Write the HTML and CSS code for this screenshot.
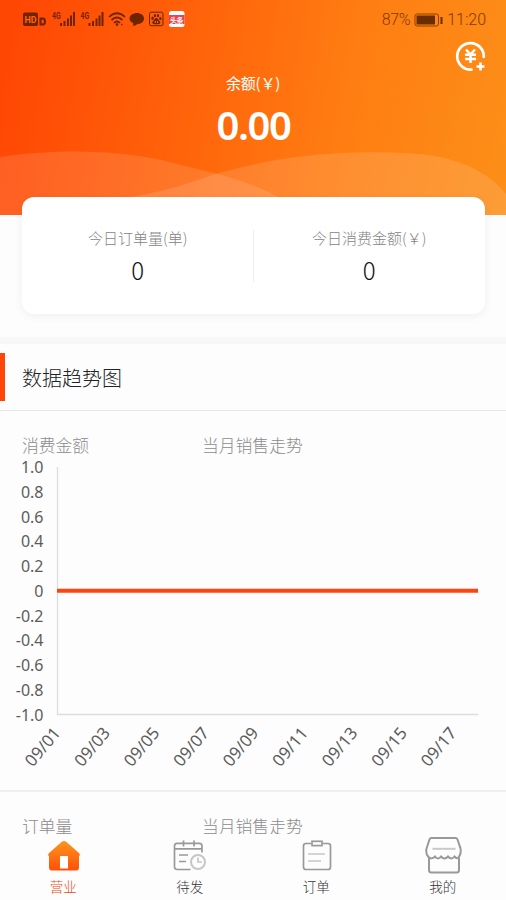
FILE: index.html
```html
<!DOCTYPE html>
<html lang="zh-CN">
<head>
<meta charset="utf-8">
<title>营业</title>
<link rel="stylesheet" href="styles.css">
</head>
<body>
<div class="app">
  <header class="hero">
    <svg class="waves" viewBox="0 0 506 215">
      <path d="M0 157C70 147 130 152 170 162C200 170 212 172 225 176C245 182 262 188 278 197L290 215H0Z" fill="#fff" fill-opacity=".12"/>
      <path d="M130 197C175 190 195 180 217 173.500C250 165 275 159 305 156C350 151 410 151 440 157C475 165 494 179 506 194V215H130Z" fill="#fff" fill-opacity=".13"/>
    </svg>
    <div class="status">
      <svg class="status-icons" width="166" height="20" viewBox="0 0 166 20" fill="#702300">
        <rect x="0" y="2.500" width="15" height="13.500" rx="2"/>
        <text class="hd" x="1.500" y="13" textLength="12">HD</text>
        <path fill-rule="evenodd" d="M16.500 7.500H20Q23 7.500 23 11.500T20 15.500H16.500ZM18.600 9.500V13.500H19.500Q21 13.500 21 11.500T19.500 9.500Z"/>
        <text class="net" x="29" y="8.500" textLength="8.500" lengthAdjust="spacingAndGlyphs">4G</text>
        <path d="M37 13h2v3h-2zM40.500 11h2v5h-2zM44 8.500h2V16h-2zM47 5.500h2V16h-2zM50 2h2v14h-2z"/>
        <text class="net" x="57.500" y="8.500" textLength="8.500" lengthAdjust="spacingAndGlyphs">4G</text>
        <path d="M65.500 13h2v3h-2zM69 11h2v5h-2zM72.500 8.500h2V16h-2zM75.500 5.500h2V16h-2zM78.500 2h2v14h-2z"/>
        <g fill="none" stroke="#702300" stroke-width="1.700">
          <path d="M86 7Q94 -0.500 102 7M88.500 10Q94 5 99.500 10M91 12.800Q94 10.200 97 12.800"/>
          <rect x="126.500" y="2.200" width="13.500" height="13.500" rx="1.500" stroke-width="1"/>
        </g>
        <circle cx="94" cy="14.600" r="1.300"/>
        <circle cx="98.800" cy="14.600" r=".8"/>
        <path d="M114 3C118 3 121 5.200 121 8.600S118 14.200 114 14.200Q112.500 16 109.500 15.800Q110.500 15 110.300 13.300Q106.500 11.500 106.500 8.600C106.500 5.200 110 3 114 3Z"/>
        <ellipse cx="129.600" cy="8.300" rx="1.200" ry="1.700"/>
        <ellipse cx="132" cy="5.700" rx="1.100" ry="1.600"/>
        <ellipse cx="135" cy="5.700" rx="1.100" ry="1.600"/>
        <ellipse cx="137.300" cy="8.500" rx="1.200" ry="1.600"/>
        <path d="M133.300 7.900C135 7.900 135.200 10 136.700 11C138 12.200 137.200 14.300 135.500 14.200H131.300C129.300 14.300 128.700 12.200 130 11C131.500 10 131.700 7.900 133.300 7.900Z"/>
        <rect x="131.700" y="11" width="1.200" height="2" fill="#fe6509"/><rect x="134" y="11" width="1.200" height="2" fill="#fe6509"/>
        <rect x="146" y="1" width="15.500" height="16" rx="2.500" fill="#fff"/>
        <rect x="146" y="5" width="15.500" height="9" fill="#f0414e"/>
        <text class="news" x="147" y="12.500" textLength="13.500">头条</text>
      </svg>
      <div class="status-right">
        <span class="percent">87%</span>
        <svg width="29" height="14" viewBox="0 0 29 14" fill="#6a2d00"><rect x="1" y="1" width="23.500" height="12" rx="2" fill="none" stroke="#8c3e05"/><rect x="2.500" y="2.500" width="18.500" height="9"/><rect x="26.500" y="4" width="2" height="7"/></svg>
        <span class="clock">11:20</span>
      </div>
    </div>
    <svg class="recharge" viewBox="0 0 32 32" fill="none" stroke="#fff">
      <path d="M16.500 28.600A13.300 13.300 0 1 1 28.800 16" stroke-width="2.700" stroke-linecap="round"/>
      <path d="M11 8.500L15.500 13.500L20 8.500M10 13.700H21M10 18H21M15.500 13.500V22" stroke-width="2.500"/>
      <path d="M25.500 21.500V29.500M21.500 25.500H29.500" stroke-width="2.600"/>
    </svg>
    <div class="balance-label">余额(￥)</div>
    <div class="balance">0.00</div>
  </header>
  <section class="card">
    <div class="stat"><span class="stat-label">今日订单量(单)</span><span class="stat-value">0</span></div>
    <div class="divider"></div>
    <div class="stat"><span class="stat-label">今日消费金额(￥)</span><span class="stat-value">0</span></div>
  </section>
  <div class="band"></div>
  <h2 class="title">数据趋势图</h2>
  <section class="panel">
    <div class="panel-head"><span>消费金额</span><span>当月销售走势</span></div>
    <svg class="chart" width="506" height="334" viewBox="0 457 506 334">
      <path d="M57.500 467V714.500H478" fill="none" stroke="#dcdde0" stroke-width="1.300"/>
      <path d="M57 590.800H478" stroke="#ff440f" stroke-width="4"/>
      <g class="y-axis">
        <text x="43.500" y="473">1.0</text><text x="43.500" y="497.800">0.8</text><text x="43.500" y="522.500">0.6</text>
        <text x="43.500" y="547.300">0.4</text><text x="43.500" y="572">0.2</text><text x="43.500" y="596.500">0</text>
        <text x="43.500" y="621.500">-0.2</text><text x="43.500" y="646.200">-0.4</text><text x="43.500" y="671">-0.6</text>
        <text x="43.500" y="695.800">-0.8</text><text x="43.500" y="720.500">-1.0</text>
      </g>
      <g class="x-axis">
        <text transform="translate(61.500 733.500) rotate(-50)">09/01</text>
        <text transform="translate(111 733.500) rotate(-50)">09/03</text>
        <text transform="translate(160.500 733.500) rotate(-50)">09/05</text>
        <text transform="translate(210 733.500) rotate(-50)">09/07</text>
        <text transform="translate(259.500 733.500) rotate(-50)">09/09</text>
        <text transform="translate(309 733.500) rotate(-50)">09/11</text>
        <text transform="translate(358.500 733.500) rotate(-50)">09/13</text>
        <text transform="translate(408 733.500) rotate(-50)">09/15</text>
        <text transform="translate(457.500 733.500) rotate(-50)">09/17</text>
      </g>
    </svg>
  </section>
  <section class="panel next">
    <div class="panel-head"><span>订单量</span><span>当月销售走势</span></div>
  </section>
  <nav class="tabs">
    <a class="tab active">
      <svg viewBox="0 0 40 40"><defs><linearGradient id="home" x2="0" y2="1"><stop offset="0" stop-color="#ff951e"/><stop offset="1" stop-color="#ff5008"/></linearGradient></defs><path d="M18.500 6Q21 4.200 23.500 6L36.500 17.500Q37.500 19 36 20.500V31.500Q36 34.500 33 34.500H9Q6 34.500 6 31.500V20.500Q4.500 19 5.500 17.500Z" fill="url(#home)"/><rect x="17" y="20" width="8" height="12.500" fill="#fff"/></svg>
      <span>营业</span>
    </a>
    <a class="tab">
      <svg viewBox="0 0 40 40" fill="none" stroke="#999" stroke-width="1.700"><path d="M20.500 33.500H7.500Q4.500 33.500 4.500 31V10Q4.500 7.300 7 7.300H29.500Q32 7.300 32 10V16.500M4.500 12.800H32M13.500 4.500V10.500M24 4.500V10.500M9 19H18M9 25.500H16"/><circle cx="28" cy="26" r="7" stroke="#c6c6c6" stroke-width="2"/><path d="M28 21.500V26H32" stroke="#c6c6c6"/></svg>
      <span>待发</span>
    </a>
    <a class="tab">
      <svg viewBox="0 0 40 40" fill="none" stroke="#999" stroke-width="1.700"><path d="M15 7.500H10Q7.500 7.500 7.500 10V31Q7.500 33.500 10 33.500H32Q34.500 33.500 34.500 31V10Q34.500 7.500 32 7.500H27"/><rect x="16" y="5.300" width="10" height="4.300"/><path d="M12 18H29M12 25H25" stroke="#c6c6c6" stroke-width="1.500"/></svg>
      <span>订单</span>
    </a>
    <a class="tab">
      <svg viewBox="0 0 40 40" fill="none" stroke="#999" stroke-width="2"><path d="M8.500 2Q7 2 6.500 3.500L4.500 9.500Q1.500 17 5.500 21Q8.500 24 12 20.500Q15 24.500 18 20.500Q21.500 24.500 25 20.500Q28.500 24.500 31.500 20.500Q34.500 24 36.500 20Q39 15 36.500 9.500L34.500 3.500Q34 2 32.500 2ZM6 22V34Q6 36.500 8.500 36.500H33.500Q36 36.500 36 34V22"/><path d="M9.500 12.800H32.500" stroke="#c9c9c9"/></svg>
      <span>我的</span>
    </a>
  </nav>
</div>
</body>
</html>
```
FILE: styles.css
```css
* { box-sizing: border-box; }
body {
  margin: 0;
  background: #fdfdfd;
  font-family: "Noto Sans CJK SC", sans-serif;
  font-weight: 300;
}
.app {
  width: 506px;
  height: 900px;
  overflow: hidden;
  display: flex;
  flex-direction: column;
}
.app > * { flex-shrink: 0; }
.hero {
  position: relative;
  height: 215px;
  background: linear-gradient(100deg, #ff4704 3%, #ff650b 40%, #ff7d12 67%, #fc8f18 100%);
  color: #fff;
  text-align: center;
}
.waves { position: absolute; left: 0; top: 0; width: 506px; height: 215px; }
.status {
  position: relative;
  display: flex;
  justify-content: space-between;
  align-items: center;
  height: 39px;
  padding: 0 20px 0 23px;
  color: #813806;
}
.hd { font: 700 9px Roboto, sans-serif; fill: #ff6510; }
.net { font: 700 9px Roboto, sans-serif; }
.news { font: 700 7px "Noto Sans CJK SC", sans-serif; fill: #fff; }
.status-right {
  display: flex;
  align-items: center;
  gap: 4px;
  font: 300 16px/20px Roboto, sans-serif;
}
.percent { letter-spacing: -0.4px; }
.recharge { position: absolute; left: 455px; top: 41px; width: 32px; height: 32px; }
.balance-label {
  position: relative;
  margin-top: 33px;
  line-height: 22px;
  font-size: 15px;
  font-weight: 400;
  letter-spacing: -0.2px;
}
.balance {
  position: relative;
  margin-top: 6px;
  padding-left: 1px;
  font: 600 40px/50px "Noto Sans", sans-serif;
  letter-spacing: -1.4px;
}
.card {
  position: relative;
  width: 463px;
  height: 117px;
  margin: -18px 0 23px 22px;
  border-radius: 12px;
  background: #fff;
  box-shadow: 0 2px 8px rgba(30, 30, 50, .06);
  display: flex;
  align-items: center;
}
.stat {
  flex: 1;
  display: flex;
  flex-direction: column;
  align-items: center;
  gap: 6px;
  padding-top: 1px;
}
.stat-label { font-size: 15px; line-height: 22px; color: #848484; }
.stat-value { font: 300 24px/30px "Noto Sans CJK SC", sans-serif; color: #111; }
.divider { width: 1px; height: 52px; margin-left: -1px; background: #eee; }
.band { height: 7px; background: #f7f7f7; }
.title {
  margin: 0;
  height: 67px;
  padding: 9px 0;
  border-bottom: 1px solid #e6e6e6;
  display: flex;
  align-items: center;
  gap: 17px;
  font-size: 20px;
  font-weight: 300;
  color: #222;
}
.title::before { content: ""; width: 5px; height: 48px; background: #ff450a; }
.panel { height: 381px; border-bottom: 2px solid #f0f0f0; }
.panel-head {
  display: grid;
  grid-template-columns: 180px auto;
  height: 46px;
  padding: 24px 22px 0;
  font-size: 16.8px;
  line-height: 20px;
  color: #8c8c8c;
}
.chart { display: block; }
.y-axis, .x-axis {
  font: 400 16px "Noto Sans", sans-serif;
  fill: #5c5c5c;
  text-anchor: end;
}
.x-axis { font-size: 16.8px; }
.next { height: 42px; border: 0; }
.next .panel-head { height: 42px; }
.tabs { display: flex; height: 66px; background: #fdfdfd; }
.tab {
  flex: 1;
  display: flex;
  flex-direction: column;
  align-items: center;
  padding-top: 2px;
  font-size: 13.5px;
  line-height: 20px;
  color: #333;
}
.tab svg { width: 40px; height: 40px; }
.active { color: #ed4a0c; }
```
